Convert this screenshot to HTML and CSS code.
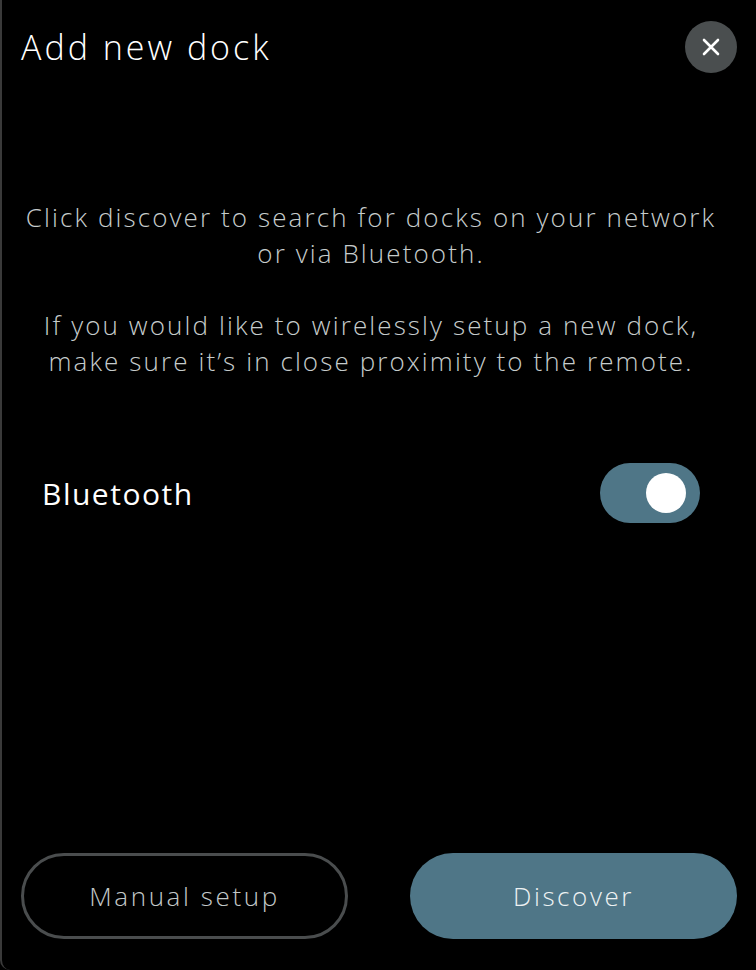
FILE: index.html
```html
<!DOCTYPE html>
<html lang="en">
<head>
    <meta charset="UTF-8">
    <meta name="viewport" content="width=device-width, initial-scale=1.0">
    <title>Add new dock</title>
    <link rel="stylesheet" href="styles.css">
</head>
<body>
    <div class="panel">
        <div class="header">
            <h1 class="title">Add new dock</h1>
            <button class="close" aria-label="Close">
                <svg width="18" height="18" viewBox="0 0 18 18">
                    <path d="M2 2 L16 16 M16 2 L2 16" stroke="#fff" stroke-width="2.6" stroke-linecap="round" fill="none"/>
                </svg>
            </button>
        </div>

        <div class="content">
            <p class="info">Click discover to search for docks on your network or via Bluetooth.</p>
            <p class="info second">If you would like to wirelessly setup a new dock, make sure it’s in close proximity to the remote.</p>

            <div class="row">
                <span class="label">Bluetooth</span>
                <div class="toggle on"><div class="knob"></div></div>
            </div>
        </div>

        <div class="footer">
            <button class="btn outline">Manual setup</button>
            <button class="btn primary">Discover</button>
        </div>
    </div>
</body>
</html>
```

FILE: styles.css
```css
*{
    margin: 0;
    padding: 0;
    box-sizing: border-box;
}
body{
    background-color: #000;
    font-family: "Open Sans", "Noto Sans", sans-serif;
    color: #fff;
}
.panel{
    height: 970px;
    border-left: 2px solid #3a3a3a;
    border-bottom-left-radius: 10px;
    padding: 21px 19px 31px 19px;
    display: flex;
    flex-direction: column;
}
.header{
    display: flex;
    justify-content: space-between;
    align-items: center;
    height: 52px;
}
.title{
    font-size: 34px;
    font-weight: 300;
    line-height: 40px;
    letter-spacing: 3px;
    color: #fff;
}
.close{
    width: 52px;
    height: 52px;
    border-radius: 50%;
    border: none;
    background-color: #4a4e4f;
    display: flex;
    align-items: center;
    justify-content: center;
}
.content{
    margin-right: 16px;
}
.info{
    font-size: 26px;
    font-weight: 300;
    line-height: 36px;
    letter-spacing: 2.1px;
    text-align: center;
    color: #c6cccc;
    margin: 126px -4px 0 -4px;
}
.info.second{
    margin-top: 36px;
}
.row{
    display: flex;
    justify-content: space-between;
    align-items: center;
    margin-top: 84px;
    padding: 0 21px;
}
.label{
    font-size: 30px;
    font-weight: 400;
    letter-spacing: 1.5px;
    color: #fff;
}
.toggle{
    width: 100px;
    height: 60px;
    border-radius: 30px;
    background-color: #4f7687;
    display: flex;
    align-items: center;
    padding: 0 14px;
}
.toggle.on{
    justify-content: flex-end;
}
.knob{
    width: 40px;
    height: 40px;
    border-radius: 50%;
    background-color: #fff;
}
.footer{
    margin-top: auto;
    display: flex;
    justify-content: space-between;
}
.btn{
    width: 327px;
    height: 86px;
    border-radius: 43px;
    font-family: "Open Sans", "Noto Sans", sans-serif;
    font-size: 26px;
    font-weight: 300;
    letter-spacing: 2.6px;
}
.btn.outline{
    background-color: transparent;
    border: 3px solid #4a4d4e;
    color: #c3c8c8;
}
.btn.primary{
    background-color: #4f7687;
    border: none;
    color: #eef2f3;
}
```
